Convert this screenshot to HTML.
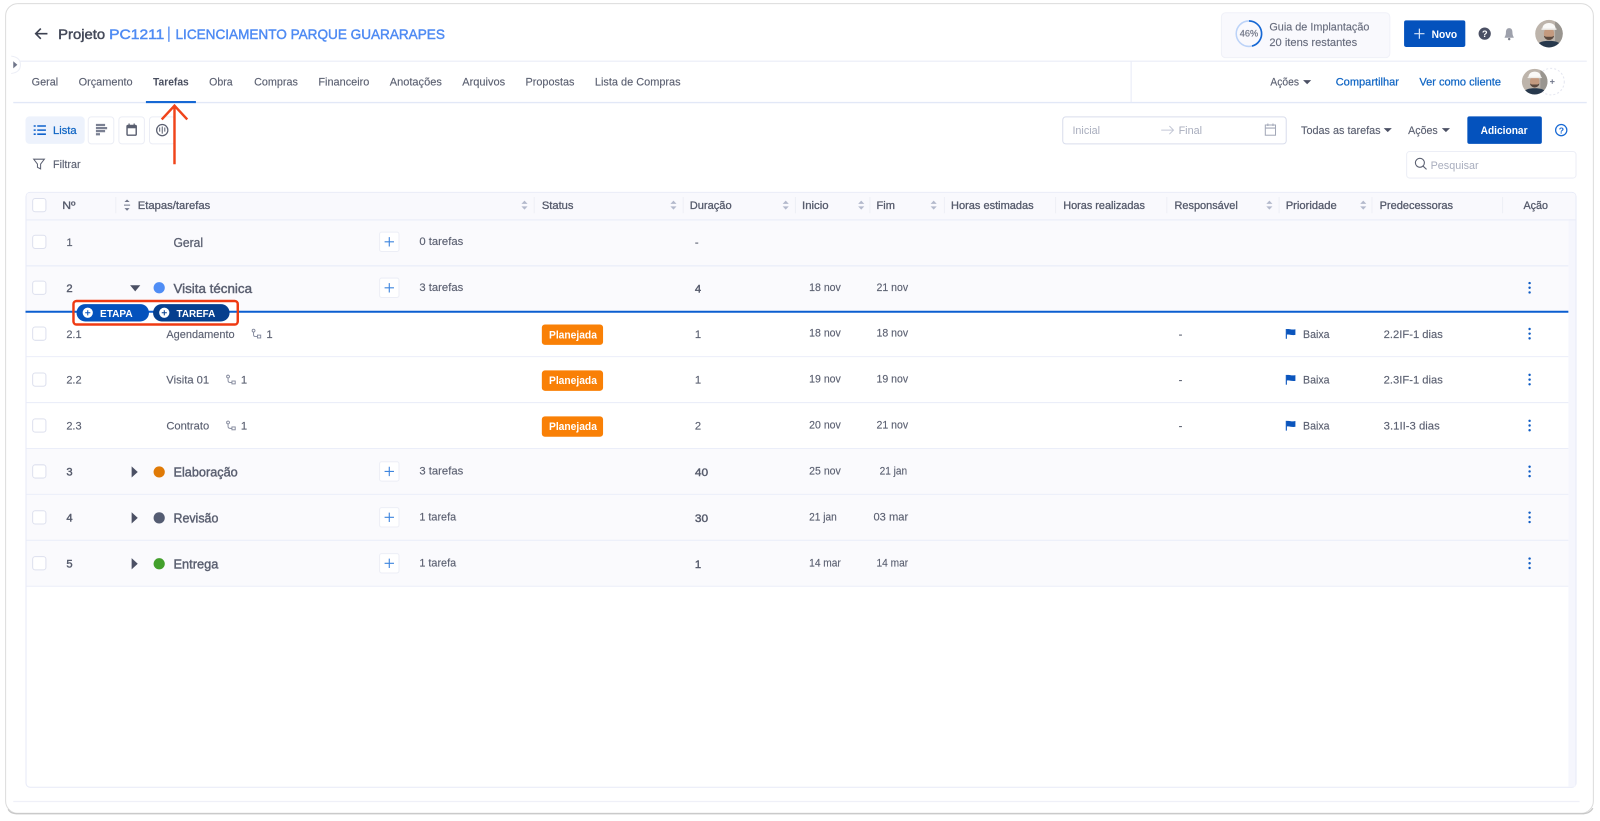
<!DOCTYPE html>
<html lang="pt">
<head>
<meta charset="utf-8">
<title>Projeto PC1211</title>
<style>
html,body{margin:0;padding:0;background:#fff;width:1600px;height:821px;overflow:hidden}
svg{display:block;filter:blur(.35px)}
text{font-family:"Liberation Sans",sans-serif;font-size:11px;fill:#5c6172;stroke:#5c6172;stroke-width:.14px;white-space:pre}
.h{font-size:10.8px;fill:#565b6c;stroke:#565b6c;stroke-width:.3px}
.b{fill:#1166c4;font-size:10.8px;stroke:#1166c4;stroke-width:.25px}
.g{font-size:12.5px;fill:#5a5f70;stroke:#5a5f70;stroke-width:.4px}
.w{fill:#fff;font-weight:bold;font-size:10.5px;stroke:none}
.p{fill:#a8adbd;font-size:10.8px;stroke:none}
.n{fill:#565b6c;stroke:#565b6c;stroke-width:.4px}
.t{font-size:14px;fill:#4f8bf3;stroke:#4f8bf3;stroke-width:.45px}
</style>
</head>
<body>
<svg xmlns="http://www.w3.org/2000/svg" width="1600" height="821" viewBox="0 0 1568 804.56">
<defs>
  <g id="s"><path d="M-3 -1.2 0 -4.4 3 -1.2Z M-3 1.2 0 4.4 3 1.2Z" fill="#b3b9cc"/></g>
  <g id="c"><rect x="-6.5" y="-6.5" width="13" height="13" rx="2.5" fill="#fff" stroke="#dde0ee"/></g>
  <g id="a"><rect x="-9.5" y="-9.5" width="19" height="19" rx="2" fill="#fff" stroke="#eceef6"/><path d="M0 -4.6V4.6M-4.6 0H4.6" stroke="#3f86de" stroke-width="1.1"/></g>
  <g id="d"><circle cx="0" cy="-4.6" r="1.2" fill="#0f5cc4"/><circle cx="0" cy="0" r="1.2" fill="#0f5cc4"/><circle cx="0" cy="4.6" r="1.2" fill="#0f5cc4"/></g>
  <g id="f"><path d="M.6 -4.6V5" stroke="#0b55bd" stroke-width="1.1"/><path d="M1 -4.4C3.5 -5.2 5.5 -3.4 9.5 -4.4V1.2C6 2 3.5 .2 1 1Z" fill="#0b55bd"/></g>
  <g id="r" fill="none" stroke="#80869a" stroke-width=".9"><circle cx="-3" cy="-3" r="1.4"/><path d="M-3 -1.5V1Q-3 2.8 -1 2.8H.6"/><rect x=".8" y="1.4" width="3.2" height="2.8"/></g>
  <clipPath id="ac"><circle cx="0" cy="0" r="13.5"/></clipPath>
  <g id="u"><g clip-path="url(#ac)"><rect x="-14" y="-14" width="28" height="28" fill="#bdb4ab"/><rect x="6" y="-14" width="8" height="28" fill="#99958f"/><path d="M-13 14C-12 8 -6 7 0 7S12 8 13 14Z" fill="#27384c"/><ellipse cx="0" cy="0" rx="5" ry="6.4" fill="#c49a7f"/><path d="M-5 2C-4 7.5 4 7.5 5 2L3 3H-3Z" fill="#5a483e"/><path d="M-6.5 -4.5C-7 -12.5 7 -12.5 6.5 -4.5Z" fill="#faf9f7"/><rect x="-7.5" y="-5.2" width="15" height="1.5" rx=".7" fill="#eeece8"/></g></g>
</defs>

<rect width="1568" height="805" fill="#fff"/>
<!-- frame -->
<rect x="5.5" y="3.5" width="1556" height="793.5" rx="12" fill="#fff" stroke="#dcdcdc"/>
<path d="M8 793Q10 797.5 18 797.5H1550Q1558 797.5 1561 792" fill="none" stroke="#c8c8c8" stroke-width="1.2"/>

<!-- lines -->
<path d="M13 60H1555" stroke="#eff1f9" stroke-width="1.5"/>
<path d="M13 100.5H1555" stroke="#e2e8f7" stroke-width="1.4"/>
<path d="M1108.5 60V100" stroke="#e8ebf7"/>
<path d="M13 785.5H1548" stroke="#eff0f8" stroke-width="1.2"/>
<path d="M11 55Q20 56 20 63.5T11 72" fill="#fff" stroke="#eceef6"/>
<path d="M13 60 17 63.5 13 67Z" fill="#70768a"/>

<!-- header -->
<path d="M46.5 33H35M40 28 35 33 40 38" fill="none" stroke="#3d4252" stroke-width="1.6"/>
<text x="57" y="38" textLength="46" lengthAdjust="spacingAndGlyphs" style="font-size:14px;fill:#454a5a;stroke:#454a5a;stroke-width:.45px">Projeto</text>
<text class="t" x="107" y="38" textLength="54" lengthAdjust="spacingAndGlyphs">PC1211</text>
<path d="M165.5 26V41" stroke="#4f8bf3" stroke-width="1.3"/>
<text class="t" x="172" y="38" textLength="264" lengthAdjust="spacingAndGlyphs">LICENCIAMENTO PARQUE GUARARAPES</text>

<!-- guide -->
<rect x="1197" y="12.5" width="165" height="44" rx="4" fill="#f9f9fd" stroke="#f0f1f8"/>
<circle cx="1224" cy="33" r="12.5" fill="none" stroke="#bcd3f8" stroke-width="1.5"/>
<path d="M1224 20.5A12.5 12.5 0 0 1 1227 45.1" fill="none" stroke="#1668d4" stroke-width="1.6"/>
<text x="1215" y="36" textLength="18" lengthAdjust="spacingAndGlyphs" style="font-size:9px;fill:#777c8c;stroke:#777c8c;stroke-width:.25px">46%</text>
<text x="1244" y="30" textLength="98" lengthAdjust="spacingAndGlyphs" style="fill:#686d7e;stroke:#686d7e">Guia de Implantação</text>
<text x="1244" y="45" textLength="86" lengthAdjust="spacingAndGlyphs" style="fill:#686d7e;stroke:#686d7e">20 itens restantes</text>
<rect x="1376" y="20" width="60" height="26" rx="2" fill="#0452bd"/>
<path d="M1391 28V38M1386 33H1396" stroke="#d5e3f8" stroke-width="1.2"/>
<text class="w" x="1403" y="37" textLength="25" lengthAdjust="spacingAndGlyphs">Novo</text>
<circle cx="1455" cy="33" r="6" fill="#4b5064"/>
<text x="1452.4" y="36.5" style="font-size:9px;font-weight:bold;fill:#fff;stroke:none">?</text>
<path d="M1479 27.5C1476.5 27.5 1475.8 29.5 1475.8 32C1475.8 35 1474.5 36 1474.5 37H1483.5C1483.5 36 1482.2 35 1482.2 32C1482.2 29.5 1481.5 27.5 1479 27.5Z" fill="#9ea1ac"/><circle cx="1479" cy="38.3" r="1.2" fill="#7e818c"/>
<use href="#u" x="1518" y="33"/>

<!-- tabs -->
<g>
<text x="31" y="84" textLength="26" lengthAdjust="spacingAndGlyphs">Geral</text>
<text x="77" y="84" textLength="53" lengthAdjust="spacingAndGlyphs">Orçamento</text>
<text x="150" y="84" textLength="35" lengthAdjust="spacingAndGlyphs" style="font-weight:bold;fill:#4a4f60;stroke:none">Tarefas</text>
<text x="205" y="84" textLength="23" lengthAdjust="spacingAndGlyphs">Obra</text>
<text x="249" y="84" textLength="43" lengthAdjust="spacingAndGlyphs">Compras</text>
<text x="312" y="84" textLength="50" lengthAdjust="spacingAndGlyphs">Financeiro</text>
<text x="382" y="84" textLength="51" lengthAdjust="spacingAndGlyphs">Anotações</text>
<text x="453" y="84" textLength="42" lengthAdjust="spacingAndGlyphs">Arquivos</text>
<text x="515" y="84" textLength="48" lengthAdjust="spacingAndGlyphs">Propostas</text>
<text x="583" y="84" textLength="84" lengthAdjust="spacingAndGlyphs">Lista de Compras</text>
</g>
<path d="M143 100H192" stroke="#1668d4" stroke-width="2"/>

<text x="1245" y="84" textLength="28" lengthAdjust="spacingAndGlyphs">Ações</text>
<path d="M1277 78.5H1285L1281 82.5Z" fill="#4b5064"/>
<text class="b" x="1309" y="84" textLength="62" lengthAdjust="spacingAndGlyphs">Compartilhar</text>
<text class="b" x="1391" y="84" textLength="80" lengthAdjust="spacingAndGlyphs">Ver como cliente</text>
<circle cx="1520" cy="80" r="13" fill="none" stroke="#e4e6f0" stroke-dasharray="2 2"/>
<path d="M1519 80H1523.5M1521.2 77.8V82.2" stroke="#70768a"/>
<g transform="translate(1504 80) scale(.93)"><use href="#u"/></g>

<!-- toolbar -->
<rect x="25" y="114" width="58" height="27" rx="4" fill="#edf2fc"/>
<path d="M36.5 123.5H45M36.5 127.5H45M36.5 131.5H45" stroke="#0f62cc" stroke-width="1.5"/>
<path d="M33 123.5H35M33 127.5H35M33 131.5H35" stroke="#0f62cc" stroke-width="1.5"/>
<text x="52" y="131.5" textLength="23" lengthAdjust="spacingAndGlyphs" style="fill:#1166c4;stroke:#1166c4;stroke-width:.25px">Lista</text>
<rect x="86.5" y="114.5" width="25" height="26.5" rx="3" fill="#fff" stroke="#ebedf5"/>
<path d="M94 122.5H103M94 125.5H105M94 128.5H103M94 131.5H98" stroke="#7a8092" stroke-width="2.2"/>
<rect x="116.5" y="114.5" width="25" height="26.5" rx="3" fill="#fff" stroke="#ebedf5"/>
<rect x="124.5" y="123" width="9" height="9.5" rx="1" fill="none" stroke="#5a5f70" stroke-width="1.4"/><path d="M124 124.5H134" stroke="#5a5f70" stroke-width="2.4"/><path d="M126.5 121V123M131.5 121V123" stroke="#5a5f70" stroke-width="1.2"/>
<rect x="146.5" y="114.5" width="25" height="26.5" rx="3" fill="#fff" stroke="#ebedf5"/>
<circle cx="159" cy="127.5" r="5.5" fill="none" stroke="#5a5f70" stroke-width="1.2"/><path d="M156.5 125V129M159 124V131M161.5 125V129" stroke="#5a5f70"/>

<path d="M33 156H43.5L39.8 160.8V165.5L36.7 164V160.8Z" fill="none" stroke="#5c6172"/>
<text x="52" y="164.5" textLength="27" lengthAdjust="spacingAndGlyphs">Filtrar</text>

<rect x="1041.5" y="114.5" width="219" height="26.5" rx="3" fill="#fff" stroke="#d9ddec"/>
<text class="p" x="1051" y="131.5" textLength="27" lengthAdjust="spacingAndGlyphs">Inicial</text>
<path d="M1138 127.5H1150M1146 123.5 1150 127.5 1146 131.5" fill="none" stroke="#c4c8d6"/>
<text class="p" x="1155" y="131.5" textLength="23" lengthAdjust="spacingAndGlyphs">Final</text>
<rect x="1240" y="122.5" width="10" height="10" fill="none" stroke="#a2a7b7"/><path d="M1240 125.5H1250M1242.5 121V123.5M1247.5 121V123.5" stroke="#a2a7b7"/>
<text x="1275" y="131.5" textLength="78" lengthAdjust="spacingAndGlyphs">Todas as tarefas</text>
<path d="M1356 125.5H1364L1360 129.5Z" fill="#4b5064"/>
<text x="1380" y="131.5" textLength="29" lengthAdjust="spacingAndGlyphs">Ações</text>
<path d="M1413 125.5H1421L1417 129.5Z" fill="#4b5064"/>
<rect x="1438" y="114" width="73" height="27" rx="2" fill="#0452bd"/>
<text class="w" x="1451" y="131.5" textLength="46" lengthAdjust="spacingAndGlyphs">Adicionar</text>
<circle cx="1530" cy="127.5" r="5.5" fill="none" stroke="#1668d4" stroke-width="1.2"/>
<text x="1527.6" y="130.8" style="font-size:8.5px;font-weight:bold;fill:#1668d4;stroke:none">?</text>
<rect x="1378.5" y="148.5" width="166" height="26" rx="3" fill="#fff" stroke="#eceef6"/>
<circle cx="1391.5" cy="159.5" r="4.4" fill="none" stroke="#5c6172" stroke-width="1.1"/><path d="M1394.8 163 1398 166" stroke="#5c6172" stroke-width="1.1"/>
<text class="p" x="1402" y="165.5" textLength="47" lengthAdjust="spacingAndGlyphs">Pesquisar</text>

<!-- table -->
<rect x="25.5" y="188.5" width="1519" height="583" rx="4" fill="#fff" stroke="#e7eaf7"/>
<path d="M26 215V192Q26 189 29 189H1540Q1544 189 1544 192V215Z" fill="#f9f9fd"/>
<rect x="1537" y="215" width="7" height="556" fill="#f5f6fd"/>
<rect x="26" y="215.5" width="1511" height="90" fill="#fafafd"/>
<rect x="26" y="440" width="1511" height="135" fill="#fafafd"/>
<g stroke="#ebeef9">
<path d="M26 215.5H1544" stroke-width="1.2"/>
<path d="M26 260.5H1537" stroke-width="1.4"/>
<path d="M26 349.5H1537M26 394.5H1537M26 439.5H1537M26 484.5H1537M26 529.5H1537M26 574.5H1537"/>
</g>
<!-- header separators -->
<path d="M113.5 193V209M523.5 193V209M669.5 193V209M779.5 193V209M852.5 193V209M925.5 193V209M1034.5 193V209M1143.5 193V209M1253.5 193V209M1344.5 193V209M1472.5 193V209" stroke="#eeeff6"/>
<use href="#c" x="38.5" y="201"/>
<text class="h" x="61" y="205" textLength="13" lengthAdjust="spacingAndGlyphs">Nº</text>
<path d="M124.5 195.5 127 198H122ZM124.5 206.5 127 204H122Z" fill="#70768a"/><path d="M121.5 201H127.5" stroke="#70768a"/>
<text class="h" x="135" y="205" textLength="71" lengthAdjust="spacingAndGlyphs">Etapas/tarefas</text>
<use href="#s" x="514" y="201"/>
<text class="h" x="531" y="205" textLength="31" lengthAdjust="spacingAndGlyphs">Status</text>
<use href="#s" x="660" y="201"/>
<text class="h" x="676" y="205" textLength="41" lengthAdjust="spacingAndGlyphs">Duração</text>
<use href="#s" x="770" y="201"/>
<text class="h" x="786" y="205" textLength="26" lengthAdjust="spacingAndGlyphs">Inicio</text>
<use href="#s" x="844" y="201"/>
<text class="h" x="859" y="205" textLength="18" lengthAdjust="spacingAndGlyphs">Fim</text>
<use href="#s" x="915" y="201"/>
<text class="h" x="932" y="205" textLength="81" lengthAdjust="spacingAndGlyphs">Horas estimadas</text>
<text class="h" x="1042" y="205" textLength="80" lengthAdjust="spacingAndGlyphs">Horas realizadas</text>
<text class="h" x="1151" y="205" textLength="62" lengthAdjust="spacingAndGlyphs">Responsável</text>
<use href="#s" x="1244" y="201"/>
<text class="h" x="1260" y="205" textLength="50" lengthAdjust="spacingAndGlyphs">Prioridade</text>
<use href="#s" x="1336" y="201"/>
<text class="h" x="1352" y="205" textLength="72" lengthAdjust="spacingAndGlyphs">Predecessoras</text>
<text class="h" x="1493" y="205" textLength="24" lengthAdjust="spacingAndGlyphs">Ação</text>

<!-- row 1 -->
<use href="#c" x="38.5" y="237"/>
<text x="65" y="241">1</text>
<text x="170" y="242" textLength="29" lengthAdjust="spacingAndGlyphs" style="font-size:12.5px;stroke-width:.3px">Geral</text>
<use href="#a" x="381.5" y="237"/>
<text x="411" y="240" textLength="43" lengthAdjust="spacingAndGlyphs">0 tarefas</text>
<text x="681" y="241">-</text>

<!-- row 2 -->
<use href="#c" x="38.5" y="282"/>
<text class="n" x="65" y="286">2</text>
<path d="M127.5 279.5H137.5L132.5 285.5Z" fill="#4b5064"/>
<circle cx="156" cy="282" r="5.5" fill="#4f8df5"/>
<text class="g" x="170" y="287" textLength="77" lengthAdjust="spacingAndGlyphs">Visita técnica</text>
<use href="#a" x="381.5" y="282"/>
<text x="411" y="285" textLength="43" lengthAdjust="spacingAndGlyphs">3 tarefas</text>
<text class="n" x="681" y="286.5">4</text>
<text x="793" y="285" textLength="31" lengthAdjust="spacingAndGlyphs">18 nov</text>
<text x="859" y="285" textLength="31" lengthAdjust="spacingAndGlyphs">21 nov</text>
<use href="#d" x="1499" y="282"/>

<!-- row 2.1 -->
<use href="#c" x="38.5" y="327"/>
<text x="65" y="331" textLength="15" lengthAdjust="spacingAndGlyphs">2.1</text>
<text x="163" y="331" textLength="67" lengthAdjust="spacingAndGlyphs">Agendamento</text>
<use href="#r" x="251.5" y="327"/>
<text x="261" y="331">1</text>
<rect x="531" y="318" width="60" height="20" rx="3" fill="#f98006"/>
<text class="w" x="538" y="331.5" textLength="47" lengthAdjust="spacingAndGlyphs">Planejada</text>
<text x="681" y="331">1</text>
<text x="793" y="330" textLength="31" lengthAdjust="spacingAndGlyphs">18 nov</text>
<text x="859" y="330" textLength="31" lengthAdjust="spacingAndGlyphs">18 nov</text>
<text x="1155" y="331">-</text>
<use href="#f" x="1260" y="327"/>
<text x="1277" y="331" textLength="26" lengthAdjust="spacingAndGlyphs">Baixa</text>
<text x="1356" y="331" textLength="58" lengthAdjust="spacingAndGlyphs">2.2IF-1 dias</text>
<use href="#d" x="1499" y="327"/>

<!-- row 2.2 -->
<use href="#c" x="38.5" y="372"/>
<text x="65" y="376" textLength="15" lengthAdjust="spacingAndGlyphs">2.2</text>
<text x="163" y="376" textLength="42" lengthAdjust="spacingAndGlyphs">Visita 01</text>
<use href="#r" x="226.5" y="372"/>
<text x="236" y="376">1</text>
<rect x="531" y="363" width="60" height="20" rx="3" fill="#f98006"/>
<text class="w" x="538" y="376.5" textLength="47" lengthAdjust="spacingAndGlyphs">Planejada</text>
<text x="681" y="376">1</text>
<text x="793" y="375" textLength="31" lengthAdjust="spacingAndGlyphs">19 nov</text>
<text x="859" y="375" textLength="31" lengthAdjust="spacingAndGlyphs">19 nov</text>
<text x="1155" y="376">-</text>
<use href="#f" x="1260" y="372"/>
<text x="1277" y="376" textLength="26" lengthAdjust="spacingAndGlyphs">Baixa</text>
<text x="1356" y="376" textLength="58" lengthAdjust="spacingAndGlyphs">2.3IF-1 dias</text>
<use href="#d" x="1499" y="372"/>

<!-- row 2.3 -->
<use href="#c" x="38.5" y="417"/>
<text x="65" y="421" textLength="15" lengthAdjust="spacingAndGlyphs">2.3</text>
<text x="163" y="421" textLength="42" lengthAdjust="spacingAndGlyphs">Contrato</text>
<use href="#r" x="226.5" y="417"/>
<text x="236" y="421">1</text>
<rect x="531" y="408" width="60" height="20" rx="3" fill="#f98006"/>
<text class="w" x="538" y="421.5" textLength="47" lengthAdjust="spacingAndGlyphs">Planejada</text>
<text x="681" y="421">2</text>
<text x="793" y="420" textLength="31" lengthAdjust="spacingAndGlyphs">20 nov</text>
<text x="859" y="420" textLength="31" lengthAdjust="spacingAndGlyphs">21 nov</text>
<text x="1155" y="421">-</text>
<use href="#f" x="1260" y="417"/>
<text x="1277" y="421" textLength="26" lengthAdjust="spacingAndGlyphs">Baixa</text>
<text x="1356" y="421" textLength="55" lengthAdjust="spacingAndGlyphs">3.1II-3 dias</text>
<use href="#d" x="1499" y="417"/>

<!-- row 3 -->
<use href="#c" x="38.5" y="462"/>
<text class="n" x="65" y="466">3</text>
<path d="M129 457 135 462.5 129 468Z" fill="#4b5064"/>
<circle cx="156" cy="462.5" r="5.5" fill="#e07a06"/>
<text class="g" x="170" y="467" textLength="63" lengthAdjust="spacingAndGlyphs">Elaboração</text>
<use href="#a" x="381.5" y="462"/>
<text x="411" y="465" textLength="43" lengthAdjust="spacingAndGlyphs">3 tarefas</text>
<text class="n" x="681" y="466.5" textLength="13" lengthAdjust="spacingAndGlyphs">40</text>
<text x="793" y="465" textLength="31" lengthAdjust="spacingAndGlyphs">25 nov</text>
<text x="862" y="465" textLength="27" lengthAdjust="spacingAndGlyphs">21 jan</text>
<use href="#d" x="1499" y="462"/>

<!-- row 4 -->
<use href="#c" x="38.5" y="507"/>
<text class="n" x="65" y="511">4</text>
<path d="M129 502 135 507.5 129 513Z" fill="#4b5064"/>
<circle cx="156" cy="507.5" r="5.5" fill="#545c72"/>
<text class="g" x="170" y="512" textLength="44" lengthAdjust="spacingAndGlyphs">Revisão</text>
<use href="#a" x="381.5" y="507"/>
<text x="411" y="510" textLength="36" lengthAdjust="spacingAndGlyphs">1 tarefa</text>
<text class="n" x="681" y="511.5" textLength="13" lengthAdjust="spacingAndGlyphs">30</text>
<text x="793" y="510" textLength="27" lengthAdjust="spacingAndGlyphs">21 jan</text>
<text x="856" y="510" textLength="34" lengthAdjust="spacingAndGlyphs">03 mar</text>
<use href="#d" x="1499" y="507"/>

<!-- row 5 -->
<use href="#c" x="38.5" y="552"/>
<text class="n" x="65" y="556">5</text>
<path d="M129 547 135 552.5 129 558Z" fill="#4b5064"/>
<circle cx="156" cy="552.5" r="5.5" fill="#43a02c"/>
<text class="g" x="170" y="557" textLength="44" lengthAdjust="spacingAndGlyphs">Entrega</text>
<use href="#a" x="381.5" y="552"/>
<text x="411" y="555" textLength="36" lengthAdjust="spacingAndGlyphs">1 tarefa</text>
<text class="n" x="681" y="556.5">1</text>
<text x="793" y="555" textLength="31" lengthAdjust="spacingAndGlyphs">14 mar</text>
<text x="859" y="555" textLength="31" lengthAdjust="spacingAndGlyphs">14 mar</text>
<use href="#d" x="1499" y="552"/>

<!-- insertion line & pills -->
<path d="M25 305.5H1537" stroke="#0b5ed0" stroke-width="2"/>
<rect x="72" y="295" width="161" height="23" rx="3" fill="#fff" stroke="#ef3a12" stroke-width="2.4"/>
<path d="M73 305.5H232" stroke="#0b5ed0" stroke-width="2"/>
<rect x="75" y="298" width="71" height="17" rx="8.5" fill="#0452bd"/>
<rect x="150" y="298" width="75" height="17" rx="8.5" fill="#063f8e"/>
<circle cx="86" cy="306.5" r="5" fill="#fff"/><path d="M86 304V309M83.5 306.5H88.5" stroke="#0452bd"/>
<circle cx="161" cy="306.5" r="5" fill="#fff"/><path d="M161 304V309M158.5 306.5H163.5" stroke="#063f8e"/>
<text class="w" x="98" y="310.5" textLength="32" lengthAdjust="spacingAndGlyphs" style="font-size:10px">ETAPA</text>
<text class="w" x="173" y="310.5" textLength="38" lengthAdjust="spacingAndGlyphs" style="font-size:10px">TAREFA</text>

<!-- red arrow -->
<path d="M171 161V104M158.5 117 171 103.5 183.5 117" fill="none" stroke="#f0441a" stroke-width="2.4"/>
</svg>
</body>
</html>
